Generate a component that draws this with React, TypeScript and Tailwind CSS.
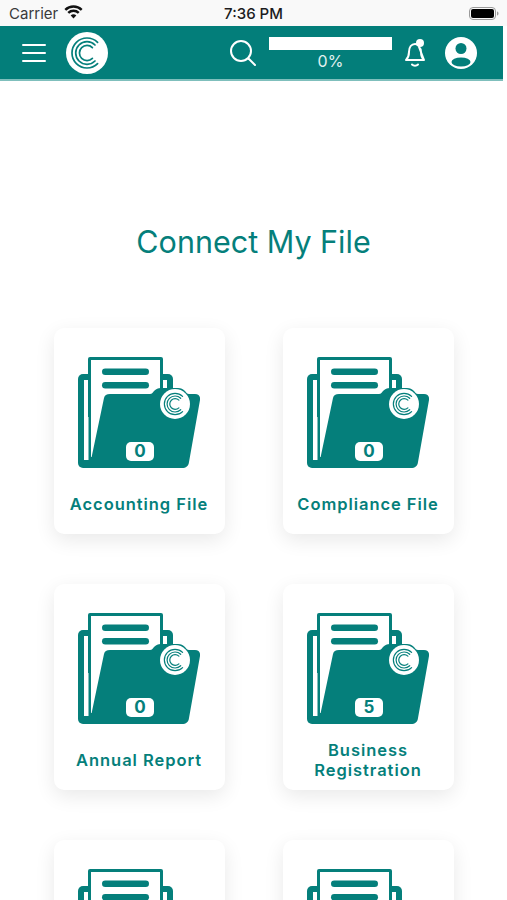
const FILES = [
  { label: 'Accounting File', count: 0 },
  { label: 'Compliance File', count: 0 },
  { label: 'Annual Report', count: 0 },
  { label: 'Business Registration', count: 5 },
  { label: '', count: null },
  { label: '', count: null },
];

// concentric "C" mark, same drawing in the header and on the folders
function LogoMark({ className }: { className: string }) {
  return (
    <svg viewBox="0 0 42 42" className={className}>
      <circle cx="21" cy="21" r="21" fill="#fff" />
      <g fill="none" stroke="#057f7b" strokeWidth="1.7" strokeLinecap="round">
        <path d="M31.600 10.400A15 15 0 1 0 31.600 31.600" />
        <path d="M29 13A11.300 11.300 0 1 0 29 29" />
        <path d="M26.400 15.600A7.600 7.600 0 1 0 26.400 26.400" />
      </g>
    </svg>
  );
}

function StatusBar() {
  return (
    <div className="h-[26px] bg-[#f9f9f9] relative flex items-center justify-between pl-[9px] pr-[8px] text-[15px] leading-none text-[#1c1c1e]">
      <div className="flex items-center gap-[6px]">
        <span className="text-[#3a3a3c]">Carrier</span>
        <svg viewBox="0 0 20 15" className="w-[19px] h-[14px] -mt-[3px]">
          <g fill="none" stroke="#111" strokeWidth="2.6">
            <path d="M1.2 5.2a12.6 12.6 0 0 1 17.6 0" />
            <path d="M4.4 8.4a8 8 0 0 1 11.2 0" />
          </g>
          <path d="M7 11.2a4.2 4.2 0 0 1 6 0L10 14.4z" fill="#111" />
        </svg>
      </div>
      <span className="absolute left-0 right-0 text-center font-medium">7:36 PM</span>
      <svg viewBox="0 0 30 13" className="w-[30px] h-[13px]">
        <rect x="0.5" y="0.5" width="26" height="12" rx="3.5" fill="none" stroke="#9a9a9a" />
        <rect x="2" y="2" width="23" height="9" rx="2" fill="#000" />
        <path d="M28 4.5c1 .3 1.5 1 1.5 2s-.5 1.700-1.500 2z" fill="#9a9a9a" />
      </svg>
    </div>
  );
}

function Header() {
  return (
    <header className="w-[503px] h-[55px] bg-[#037e7a] border-b-2 border-[#7fbfbc] flex items-center text-white">
      <div className="w-[24px] ml-[22px] flex flex-col gap-[6px]">
        <div className="h-[2px] bg-white rounded-full" />
        <div className="h-[2px] bg-white rounded-full" />
        <div className="h-[2px] bg-white rounded-full" />
      </div>
      <LogoMark className="w-[42px] h-[42px] ml-[20px]" />
      <svg viewBox="0 0 26 26" className="w-[26px] h-[26px] ml-[122px]" fill="none" stroke="#fff" strokeWidth="2">
        <circle cx="11" cy="11" r="10" />
        <path d="M18.500 18.500 25 25" strokeLinecap="round" />
      </svg>
      <div className="w-[123px] ml-[13px] mt-[3px] flex flex-col items-center">
        <div className="w-full h-[13px] bg-white" />
        <span className="text-[16px] leading-[22px] text-[#e2f1f0] font-normal">0%</span>
      </div>
      <svg viewBox="0 0 22 29" className="w-[22px] h-[29px] ml-[12px]">
        <path d="M2 22c2-2 3-4 3-8 0-5 2.500-8 6-8 1 0 2 .2 3 .8M15 9c1.500 1.300 2 3 2 5 0 4 1 6 3 8z M2 22h18" fill="none" stroke="#fff" strokeWidth="2" strokeLinejoin="round" strokeLinecap="round" />
        <circle cx="16" cy="5" r="4" fill="#fff" />
        <path d="M8 26.500c1.500 1.500 4.500 1.500 6 0" fill="none" stroke="#fff" strokeWidth="2" strokeLinecap="round" />
      </svg>
      <svg viewBox="0 0 32 32" className="w-[32px] h-[32px] ml-[19px]">
        <circle cx="16" cy="16" r="16" fill="#fff" />
        <circle cx="16" cy="11.500" r="5.500" fill="#037e7a" />
        <ellipse cx="16" cy="25" rx="9.500" ry="4.500" fill="#037e7a" />
      </svg>
    </header>
  );
}

function FolderIcon({ count }: { count: number | null }) {
  return (
    <div className="relative w-[122px] h-[111px]">
      <svg viewBox="0 0 122 111" className="w-[122px] h-[111px]">
        <rect x="0" y="17" width="95" height="94" rx="5" fill="#057f7b" />
        <rect x="6" y="23" width="4.500" height="80" fill="#fff" />
        <rect x="85" y="23" width="4" height="16" fill="#fff" />
        <path d="M12 0H83a2 2 0 0 1 2 2V60H10V2a2 2 0 0 1 2-2z" fill="#057f7b" />
        <path d="M13 3H82V100H13z" fill="#fff" />
        <rect x="24" y="11.500" width="47" height="6.500" rx="3.250" fill="#057f7b" />
        <rect x="24" y="25" width="47" height="6.500" rx="3.250" fill="#057f7b" />
        <path d="M32 37H72C74 37 75 35 76 34C78 32 80 31 83 31H100C103 31 105 32 107 34C108 35 109 37 111 37H117C121 37 122.500 40 122 43L111 105C110.500 109 108 111 104 111H10V103H13L26 41C26.500 38.500 28.500 37 32 37z" fill="#057f7b" />
        <circle cx="97" cy="47" r="15" fill="#fff" />
        <g fill="none" stroke="#057f7b" strokeWidth="1.200" strokeLinecap="round">
          <path d="M104.600 39.400A10.700 10.700 0 1 0 104.600 54.600" />
          <path d="M102.700 41.300A8 8 0 1 0 102.700 52.700" />
          <path d="M100.900 43.100A5.400 5.400 0 1 0 100.900 50.900" />
        </g>
      </svg>
      {count !== null && (
        <div className="absolute left-[48px] top-[85px] w-[28px] h-[19px] bg-white rounded-[5px] flex items-center justify-center text-[17px] leading-none font-bold text-[#057f7b]">
          {count}
        </div>
      )}
    </div>
  );
}

function FileCard({ label, count }: { label: string; count: number | null }) {
  return (
    <div className="h-[206px] bg-white rounded-[10px] shadow-[0_6px_20px_rgba(0,0,0,0.09)] flex flex-col items-center pt-[29px] pr-px">
      <FolderIcon count={count} />
      <div className="h-[40px] mt-[16px] w-full flex items-center justify-center text-center text-[16.500px] leading-[20px] font-semibold tracking-[0.95px] text-[#057f7b] px-[10px]">
        {label}
      </div>
    </div>
  );
}

export default function App() {
  return (
    <div className="h-[900px] overflow-hidden bg-white font-['Inter',sans-serif]">
      <StatusBar />
      <Header />
      <h1 className="mt-[141px] text-center text-[30.500px] leading-[40px] font-normal text-[#057f7b]">Connect My File</h1>
      <div className="mt-[66px] px-[54px] grid grid-cols-[171px_171px] gap-x-[58px] gap-y-[50px]">
        {FILES.map((f, i) => (
          <FileCard key={i} label={f.label} count={f.count} />
        ))}
      </div>
    </div>
  );
}
